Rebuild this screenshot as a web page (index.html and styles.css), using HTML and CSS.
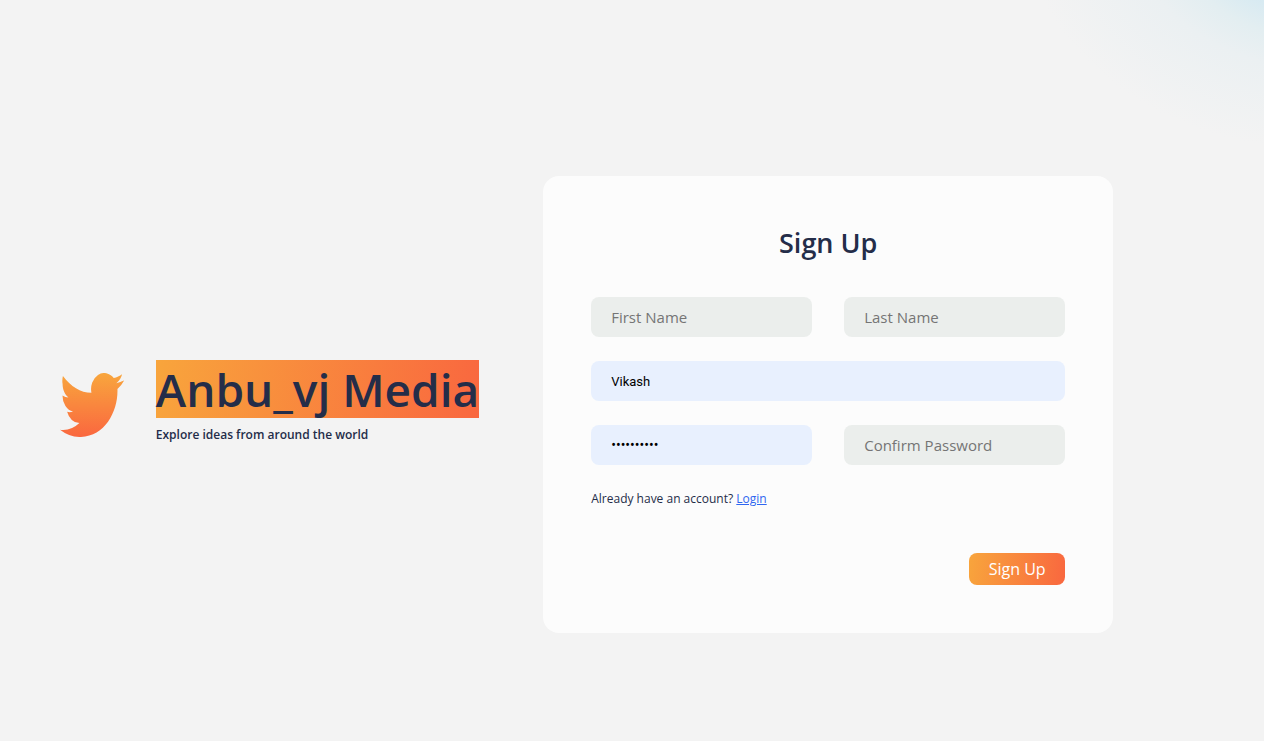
FILE: index.html
```html
<!DOCTYPE html>
<html lang="en">
<head>
  <meta charset="utf-8">
  <meta name="viewport" content="width=device-width, initial-scale=1">
  <title>Anbu_vj Media</title>
  <link rel="stylesheet" href="styles.css">
</head>
<body>
  <main class="auth">
    <section class="brand">
      <svg class="brand-logo" viewBox="0 2.25 24 19.5" preserveAspectRatio="none" aria-hidden="true">
        <defs>
          <linearGradient id="bird" x1="0" y1="0" x2="0" y2="1">
            <stop offset="0" stop-color="#f8a63d"/>
            <stop offset="1" stop-color="#fa673f"/>
          </linearGradient>
        </defs>
        <path fill="url(#bird)" d="M23.953 4.57a10 10 0 01-2.825.775 4.958 4.958 0 002.163-2.723c-.951.555-2.005.959-3.127 1.184a4.92 4.92 0 00-8.384 4.482C7.69 8.295 4.067 6.33 1.1 3.162a4.822 4.822 0 00-.126 2.475c0 1.71.87 3.213 2.188 4.096a4.904 4.904 0 01-2.228-.616v.06a4.923 4.923 0 003.946 4.827 4.996 4.996 0 01-2.212.085 4.936 4.936 0 004.604 3.417 9.867 9.867 0 01-6.102 2.105c-.39 0-.779-.023-1.17-.067a13.995 13.995 0 007.557 2.209c9.053 0 13.998-7.496 13.998-13.985 0-.21 0-.42-.015-.63A9.935 9.935 0 0024 4.59z"/>
      </svg>
      <div class="brand-text">
        <h1 class="brand-name">Anbu_vj Media</h1>
        <p class="brand-tagline">Explore ideas from around the world</p>
      </div>
    </section>

    <form class="card">
      <h2 class="card-title">Sign Up</h2>
      <div class="row">
        <input class="field" type="text" placeholder="First Name" aria-label="First Name">
        <input class="field" type="text" placeholder="Last Name" aria-label="Last Name">
      </div>
      <div class="row">
        <input class="field field-filled" type="text" value="Vikash" aria-label="Username">
      </div>
      <div class="row">
        <input class="field field-filled" type="password" value="vikash1234" aria-label="Password">
        <input class="field" type="password" placeholder="Confirm Password" aria-label="Confirm Password">
      </div>
      <p class="switch">Already have an account? <a class="switch-link" href="#">Login</a></p>
      <button class="submit" type="submit">Sign Up</button>
    </form>
  </main>
</body>
</html>
```
FILE: styles.css
```css
* {
  box-sizing: border-box;
}

body {
  margin: 0;
  min-height: 100vh;
  display: flex;
  color: #242d49;
  font-family: "Segoe UI", "Open Sans", sans-serif;
  background:
    radial-gradient(300px 230px at calc(100% + 60px) -80px, #d7eaf2 40%, #e3eef1 52%, #ebf0f2 65%, #f3f3f3 100%),
    #f3f3f3;
}

h1,
h2,
p {
  margin: 0;
}

.auth {
  flex: 1;
  display: flex;
  align-items: center;
  justify-content: center;
  gap: 64px;
  padding: 68px 91px 0 0;
}

.brand {
  display: flex;
  align-items: center;
  gap: 32px;
}

.brand-logo {
  width: 64px;
  height: 64px;
}

.brand-text {
  padding-bottom: 6px;
}

.brand-name {
  font-size: 46px;
  line-height: 58px;
  font-weight: 600;
  background: linear-gradient(98.63deg, #f8a53c 0%, #f9673f 100%);
}

.brand-tagline {
  margin-top: 8px;
  font-size: 12px;
  line-height: 18px;
  font-weight: 600;
}

.card {
  width: 570px;
  display: flex;
  flex-direction: column;
  gap: 24px;
  padding: 48px;
  border-radius: 16px;
  background: #fcfcfc;
}

.card-title {
  margin-bottom: 12px;
  font-size: 27px;
  line-height: 37px;
  font-weight: 600;
  text-align: center;
}

.row {
  display: flex;
  gap: 32px;
}

.field {
  flex: 1;
  min-width: 0;
  height: 40px;
  padding: 0 20px;
  border: none;
  border-radius: 8px;
  outline: none;
  color: #000;
  font: 15px "Segoe UI", "Open Sans", sans-serif;
  background: #ebeeec;
}

.field::placeholder {
  color: #757575;
}

.field-filled {
  font: 13px Roboto, "Liberation Sans", sans-serif;
  background: #e8f0fe;
}

.field-filled[type="password"] {
  font-size: 14px;
}

.switch {
  font-size: 12px;
  line-height: 20px;
}

.switch-link {
  color: #2f66f0;
}

.submit {
  align-self: flex-end;
  width: 96px;
  height: 32px;
  margin-top: 20px;
  padding: 0;
  border: none;
  border-radius: 8px;
  color: #fff;
  font: 16px "Segoe UI", "Open Sans", sans-serif;
  background: linear-gradient(98.63deg, #f8a53c 0%, #f9673f 100%);
}
```
